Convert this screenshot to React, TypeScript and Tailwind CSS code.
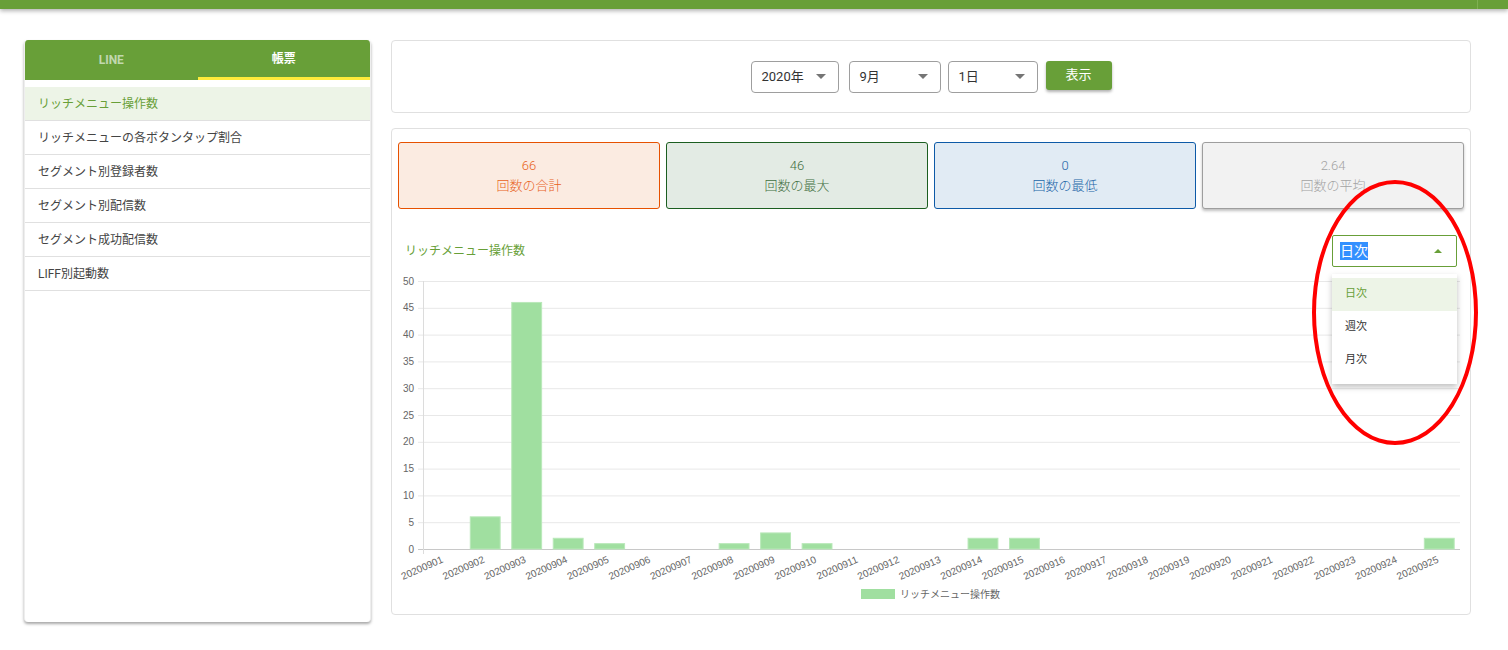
import React from 'react';

const font = { fontFamily: 'Roboto, "Noto Sans CJK JP", sans-serif' };

const menuItems = [
  'リッチメニュー操作数',
  'リッチメニューの各ボタンタップ割合',
  'セグメント別登録者数',
  'セグメント別配信数',
  'セグメント成功配信数',
  'LIFF別起動数',
];

const stats = [
  { value: '66', label: '回数の合計', box: 'border-[#e65100] bg-[#fbebe1] text-[#e8611a]' },
  { value: '46', label: '回数の最大', box: 'border-[#1b5e20] bg-[#e3ebe4] text-[#3f6e40]' },
  { value: '0', label: '回数の最低', box: 'border-[#0d5aa7] bg-[#e1ebf4] text-[#2265a8]' },
  { value: '2.64', label: '回数の平均', box: 'border-[#9e9e9e] bg-[#f2f2f2] text-[#a3a3a3] shadow-[0_2px_3px_rgba(0,0,0,0.25)]' },
];

const values = [0, 6, 46, 2, 1, 0, 0, 1, 3, 1, 0, 0, 0, 2, 2, 0, 0, 0, 0, 0, 0, 0, 0, 0, 2];

function Caret() {
  return (
    <svg width="10" height="5" viewBox="0 0 10 5">
      <path d="M0 0 L10 0 L5 5 Z" fill="#757575" />
    </svg>
  );
}

function DateSelect({ label, width }: { label: string; width: string }) {
  return (
    <div className={`${width} h-[32px] flex items-center justify-between pl-[10px] pr-[12px] border border-[#9e9e9e] rounded-[4px] text-[13px] text-[#333]`}>
      <span>{label}</span>
      <Caret />
    </div>
  );
}

function BarChart() {
  const L = 25;
  const R = 1062;
  const zero = 279;
  const unit = 5.36;
  const cw = (R - L) / values.length;
  const ticks = [0, 5, 10, 15, 20, 25, 30, 35, 40, 45, 50];
  const chartFont = '"Liberation Sans", Arial, sans-serif';
  return (
    <svg width="1066" height="340" className="block">
      {ticks.map((t) => {
        const y = zero - t * unit;
        return (
          <g key={t}>
            <line x1={L - 5} x2={R} y1={y + 0.5} y2={y + 0.5} stroke={t === 0 ? '#c8c8c8' : '#e8e8e8'} />
            <text x={L - 9} y={y + 3.5} textAnchor="end" fontSize="10" fill="#666" fontFamily={chartFont}>
              {t}
            </text>
          </g>
        );
      })}
      <line x1={L + 0.5} x2={L + 0.5} y1={zero - 50 * unit} y2={zero + 5} stroke="#dcdcdc" />
      {values.map((v, i) => {
        const cx = L + cw * (i + 0.5);
        const bw = cw * 0.72;
        const h = v * unit;
        return (
          <g key={i}>
            {v > 0 && <rect x={cx - bw / 2} y={zero - h} width={bw} height={h} fill="#a0dfa0" stroke="#b9e8b9" strokeWidth="1" />}
            <text
              x={cx}
              y={zero + 13}
              textAnchor="end"
              fontSize="10"
              fill="#666"
              fontFamily={chartFont}
              transform={`rotate(-24 ${cx} ${zero + 13})`}
            >
              {`202009${String(i + 1).padStart(2, '0')}`}
            </text>
          </g>
        );
      })}
      <rect x="463" y="319" width="34" height="10" fill="#a0dfa0" />
      <text x="502" y="327.5" fontSize="10" fill="#666" fontFamily='"Noto Sans CJK JP", sans-serif'>
        リッチメニュー操作数
      </text>
    </svg>
  );
}

export default function App() {
  return (
    <div className="w-[1508px] h-[650px] bg-white relative overflow-hidden" style={font}>
      <div className="h-[9px] bg-[#689f38] flex justify-end shadow-[0_2px_4px_rgba(0,0,0,0.3)] relative z-10">
        <div className="w-[31px] border-l border-[#7fb052]" />
      </div>

      <div className="flex pl-[24px] pt-[31px] gap-[20px]">
        {/* sidebar */}
        <div className="w-[347px] h-[582px] bg-white rounded-[4px] shadow-[0_2px_3px_rgba(0,0,0,0.35)] border-x border-[#eeeeee] overflow-hidden">
          <div className="flex h-[40px] bg-[#689f38] text-[12px] font-bold">
            <div className="flex-1 flex items-center justify-center text-white/60">LINE</div>
            <div className="flex-1 flex items-center justify-center text-white border-b-[3px] border-[#ffeb3b]">帳票</div>
          </div>
          <div className="pt-[7px]">
            {menuItems.map((m, i) => (
              <div
                key={m}
                className={`h-[34px] flex items-center pl-[13px] text-[12px] border-b border-[#e0e0e0] ${i === 0 ? 'bg-[#edf4e7] text-[#689f38]' : 'text-[#444]'}`}
              >
                {m}
              </div>
            ))}
          </div>
        </div>

        {/* main */}
        <div className="w-[1080px] flex flex-col gap-[15px]">
          <div className="h-[73px] border border-[#e0e0e0] rounded-[4px] flex items-center justify-center">
            <DateSelect label="2020年" width="w-[88px]" />
            <div className="ml-[10px]"><DateSelect label="9月" width="w-[92px]" /></div>
            <div className="ml-[7px]"><DateSelect label="1日" width="w-[90px]" /></div>
            <button className="ml-[8px] -mt-[3px] w-[66px] h-[29px] bg-[#689f38] text-white text-[13px] rounded-[3px] shadow-[0_2px_3px_rgba(0,0,0,0.3)]">
              表示
            </button>
          </div>

          <div className="h-[487px] border border-[#e0e0e0] rounded-[4px] px-[6px] pt-[13px] relative">
            <div className="grid grid-cols-4 gap-[6px]">
              {stats.map((s) => (
                <div key={s.label} className={`h-[67px] border rounded-[3px] flex flex-col items-center justify-center text-[13px] leading-[20px] font-light ${s.box}`}>
                  <div>{s.value}</div>
                  <div>{s.label}</div>
                </div>
              ))}
            </div>

            <div className="mt-[26px] h-[32px] flex items-center justify-between pl-[7px] pr-[7px]">
              <div className="text-[12px] text-[#689f38]">リッチメニュー操作数</div>
              <div className="relative w-[125px] h-[32px] border border-[#689f38] rounded-[2px] flex items-center justify-between pl-[7px] pr-[14px] z-20">
                <span className="text-[14px] leading-[18px] bg-[#3390ff] text-white">日次</span>
                <svg width="8" height="4" viewBox="0 0 8 4">
                  <path d="M0 4 L8 4 L4 0 Z" fill="#689f38" />
                </svg>
                <div className="absolute left-[-1px] top-[38px] w-[125px] bg-white shadow-[0_3px_6px_rgba(0,0,0,0.25)] pt-[4px] pb-[7px] text-[11px]">
                  <div className="h-[33px] flex items-center pl-[13px] bg-[#edf4e7] text-[#689f38]">日次</div>
                  <div className="h-[33px] flex items-center pl-[13px] text-[#333]">週次</div>
                  <div className="h-[33px] flex items-center pl-[13px] text-[#333]">月次</div>
                </div>
              </div>
            </div>

            <div className="mt-[3px]">
              <BarChart />
            </div>

            <div className="absolute left-[920px] top-[51px] w-[166px] h-[265px] rounded-[50%] border-[4px] border-[#ff0000] pointer-events-none z-30" />
          </div>
        </div>
      </div>
    </div>
  );
}
